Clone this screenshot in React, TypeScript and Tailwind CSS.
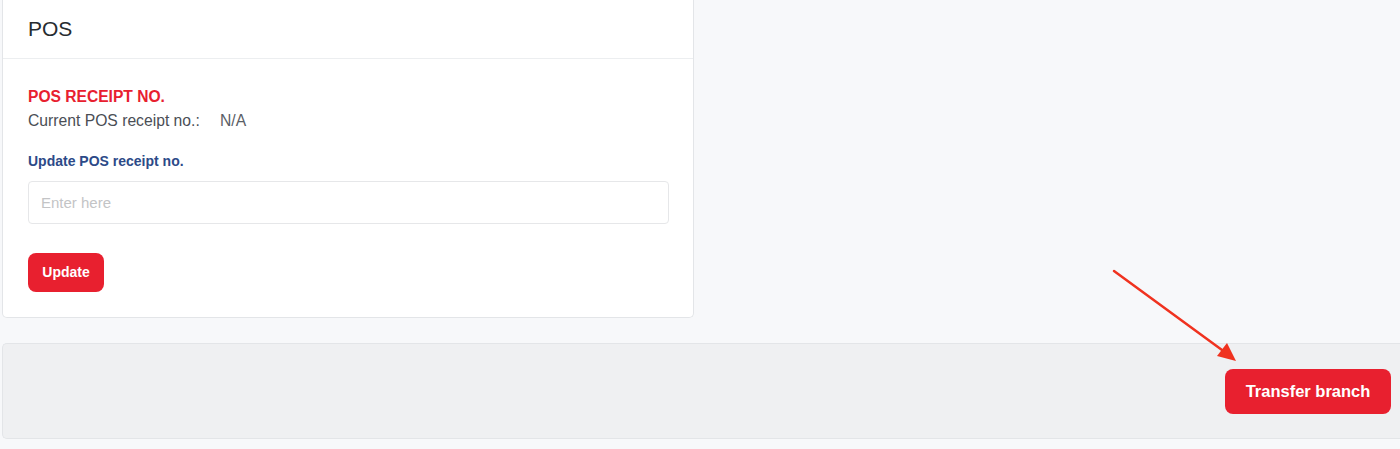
import React from "react";

export default function App() {
  return (
    <div
      className="relative min-h-[449px] w-full overflow-hidden bg-[#f7f8fa]"
      style={{ fontFamily: '"Liberation Sans", Arial, Helvetica, sans-serif' }}
    >
      <div className="ml-[2px] w-[692px] rounded-b-[5px] border border-t-0 border-[#e3e5e8] bg-white">
        <div className="flex h-[59px] items-center border-b border-[#eceef0] pl-[25px] text-[21px] text-[#272c30]">
          POS
        </div>
        <div className="px-[25px] pb-[25px] pt-[28px]">
          <div className="text-[15.6px] font-bold leading-[20px] text-[#e8202f]">POS RECEIPT NO.</div>
          <div className="mt-[2px] flex text-[15.7px] leading-[24px] text-[#4a4e55]">
            <span className="w-[192px]">Current POS receipt no.:</span>
            <span className="text-[#5a5e66]">N/A</span>
          </div>
          <div className="mt-[18px] text-[14px] font-bold leading-[20px] text-[#2c4a88]">Update POS receipt no.</div>
          <input
            className="mt-[10px] h-[43px] w-[641px] rounded-[4px] border border-[#e6e7e9] px-[12px] text-[15px] text-[#333] outline-none placeholder:text-[#c3c4c6]"
            placeholder="Enter here"
          />
          <button className="mt-[29px] flex h-[39px] w-[76px] items-center justify-center rounded-[8px] bg-[#e8202f] text-[14px] font-bold text-white">
            Update
          </button>
        </div>
      </div>

      <div className="ml-[2px] mt-[25px] flex h-[96px] items-center justify-end rounded-l-[5px] border border-r-0 border-[#e3e5e8] bg-[#eff0f2] pr-[9px]">
        <button className="flex h-[45px] w-[166px] items-center justify-center rounded-[8px] bg-[#e8202f] text-[16.5px] font-bold text-white">
          Transfer branch
        </button>
      </div>

      <svg className="pointer-events-none absolute left-0 top-0" width="1400" height="449">
        <line x1="1114" y1="271" x2="1222" y2="350" stroke="#f0321f" strokeWidth="2.5" strokeLinecap="round" />
        <polygon points="1236,361 1217,356 1227,343" fill="#f0321f" />
      </svg>
    </div>
  );
}
